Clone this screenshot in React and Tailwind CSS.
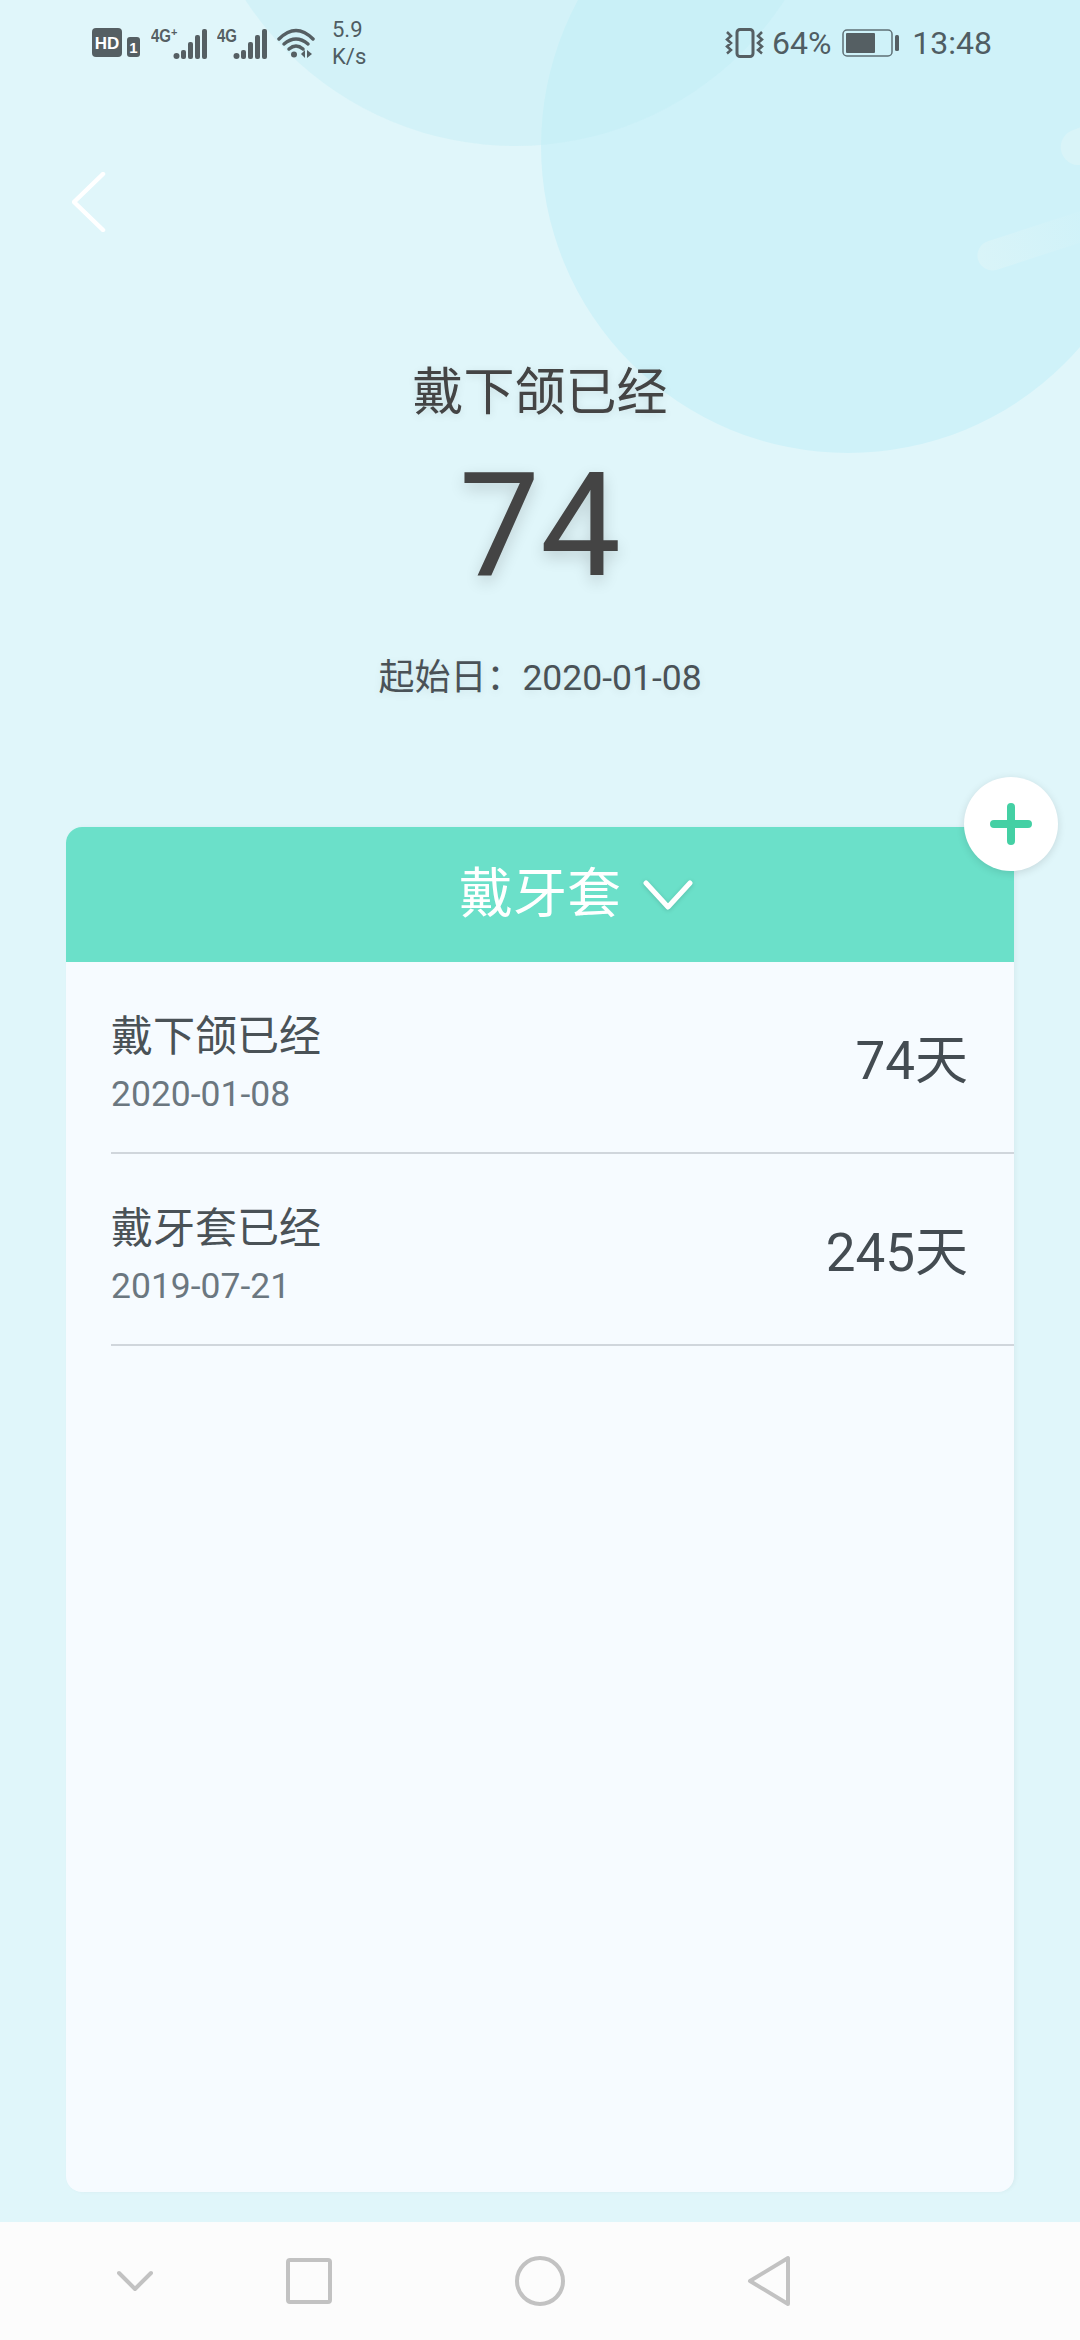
import React from 'react';

const rows = [
  { title: '戴下颌已经', date: '2020-01-08', days: '74' },
  { title: '戴牙套已经', date: '2019-07-21', days: '245' },
];

// offset pulls the bars closer to the label (plain 4G has no plus sign)
const SignalIcon = ({ plus, offset = 0 }) => (
  <svg width={56 - offset} height="34" viewBox={`0 0 ${56 - offset} 34`} fill="#555f63" className="block">
    <text x="0" y="16" fontSize="18" fontWeight="700" textLength="20" lengthAdjust="spacingAndGlyphs" fontFamily="'Liberation Sans',sans-serif">4G</text>
    {plus && <text x="20" y="10" fontSize="11" fontWeight="700" fontFamily="'Liberation Sans',sans-serif">+</text>}
    <g transform={`translate(${-offset} 0)`}>
      <circle cx="25.5" cy="30" r="3" />
      <rect x="30" y="24" width="5" height="9" rx="2" />
      <rect x="37" y="16" width="5" height="17" rx="2" />
      <rect x="44" y="9" width="5" height="24" rx="2" />
      <rect x="51" y="3" width="5" height="30" rx="2" />
    </g>
  </svg>
);

const StatusBar = () => (
  <div className="flex h-[86px] items-center pl-[92px] pr-[88px] text-[#4f5d63]">
    <svg width="48" height="30" viewBox="0 0 48 30" className="block">
      <rect x="0" y="0" width="30" height="29" rx="4" fill="#555f63" />
      <text x="15" y="21" textAnchor="middle" fontSize="17" fontWeight="700" fill="#fff" fontFamily="'Liberation Sans',sans-serif">HD</text>
      <rect x="35" y="9" width="13" height="20" rx="3" fill="#555f63" />
      <text x="41.5" y="25" textAnchor="middle" fontSize="15" fontWeight="700" fill="#fff" fontFamily="'Liberation Sans',sans-serif">1</text>
    </svg>
    <div className="ml-[11px]"><SignalIcon plus /></div>
    <div className="ml-[10px]"><SignalIcon offset={6} /></div>
    <svg width="38" height="30" viewBox="0 0 38 30" fill="none" stroke="#555f63" strokeWidth="3.5" strokeLinecap="round" className="ml-[10px] block">
      <path d="M2 11Q19 -6 36 11" />
      <path d="M7 16Q19 6 31 16" />
      <path d="M12 21Q19 15 26 21" />
      <circle cx="17" cy="26.5" r="3" fill="#555f63" stroke="none" />
      <path d="M28 22v8l-4-4zM30 22v8l5-4z" fill="#555f63" stroke="none" />
    </svg>
    <div className="ml-[17px] w-[40px] font-['Roboto',sans-serif] text-[22px] leading-[27px]">
      <div>5.9</div>
      <div>K/s</div>
    </div>
    <div className="flex-1" />
    <svg width="40" height="30" viewBox="0 0 40 30" fill="none" stroke="#555f63" className="block">
      <rect x="13" y="1.5" width="16" height="27" rx="3" strokeWidth="3" />
      <path d="M3 4l4 4-4 3.500 4 3.500-4 3.500 4 3.500-4 3.500M38 4l-4 4 4 3.500-4 3.500 4 3.500-4 3.500 4 3.500" strokeWidth="2.5" />
    </svg>
    <span className="ml-[8px] font-['Roboto',sans-serif] text-[32px] leading-none">64%</span>
    <svg width="57" height="28" viewBox="0 0 57 28" fill="none" className="ml-[11px] block">
      <rect x="1" y="1" width="49" height="26" rx="4" stroke="#5f7076" strokeWidth="1.5" />
      <rect x="4" y="4" width="29" height="20" rx="1" fill="#555f63" />
      <rect x="53" y="6" width="4" height="16" rx="1.5" fill="#555f63" />
    </svg>
    <span className="ml-[13px] font-['Roboto',sans-serif] text-[32px] leading-none">13:48</span>
  </div>
);

const NavBar = () => (
  <div className="relative h-[118px] bg-[#fcfcfc]">
    <div className="flex h-full items-center pl-[117px]">
      <svg width="36" height="22" viewBox="0 0 36 22" fill="none" stroke="#c2c2c2" strokeWidth="4" strokeLinecap="round" strokeLinejoin="round" className="block">
        <path d="M2 3l16 16L34 3" />
      </svg>
      <svg width="46" height="46" viewBox="0 0 46 46" fill="none" stroke="#c2c2c2" strokeWidth="4" className="ml-[133px] block">
        <rect x="2" y="2" width="42" height="42" rx="2" />
      </svg>
      <svg width="50" height="50" viewBox="0 0 50 50" fill="none" stroke="#c2c2c2" strokeWidth="4" className="ml-[183px] block">
        <circle cx="25" cy="25" r="23" />
      </svg>
      <svg width="44" height="52" viewBox="0 0 44 52" fill="none" stroke="#c2c2c2" strokeWidth="4" strokeLinejoin="round" className="ml-[182px] block">
        <path d="M41 3v46L3 26z" />
      </svg>
    </div>
  </div>
);

const App = () => {
  return (
    <div className="relative flex h-[2340px] w-[1080px] flex-col overflow-hidden bg-[#e0f6fa] font-['Roboto','Noto_Sans_CJK_SC',sans-serif] text-[#444]">
      {/* background decoration */}
      <div className="absolute left-[541px] top-[-161px] h-[614px] w-[614px] rounded-full bg-[#cff2f9]" />
      <div className="absolute left-[193px] top-[-498px] h-[644px] w-[644px] rounded-full bg-[#c0eef5]/40" />
      <div className="absolute left-[975px] top-[225px] h-[30px] w-[130px] -rotate-[18deg] rounded-full bg-gradient-to-r from-[#d9f4f8] to-transparent" />
      <div className="absolute left-[1060px] top-[125px] h-[36px] w-[60px] -rotate-[20deg] rounded-full bg-[#d9f4f8]" />

      <div className="relative flex flex-1 flex-col">
        <StatusBar />
        <div className="pl-[72px] pt-[86px]">
          <svg width="34" height="60" viewBox="0 0 34 60" fill="none" stroke="#fff" strokeWidth="4.5" strokeLinecap="round" strokeLinejoin="round" className="block">
            <path d="M31 2L2 30l29 28" />
          </svg>
        </div>

        <div className="flex flex-col items-center">
          <div className="mt-[126px] text-[51px] leading-[70px] [text-shadow:0_2px_8px_rgba(0,0,0,0.1)]">戴下颌已经</div>
          <div className="mt-[18px] text-[144px] leading-[160px] [text-shadow:0_6px_16px_rgba(0,0,0,0.16)]">74</div>
          <div className="mt-[47px] text-[36px] leading-[50px] text-[#4a5257] [text-shadow:0_2px_8px_rgba(0,0,0,0.08)]">
            起始日：<span className="text-[35.5px]">2020-01-08</span>
          </div>
        </div>

        {/* card */}
        <div className="relative mx-[66px] mt-[124px] flex-1 rounded-[16px] bg-[#f6fbff] shadow-[2px_0_4px_rgba(0,0,0,0.04)]">
          <div className="flex h-[135px] items-center justify-center rounded-t-[16px] bg-[#6be0c9] text-white">
            <span className="ml-[72px] text-[54px] leading-none">戴牙套</span>
            <svg width="50" height="30" viewBox="0 0 50 30" fill="none" stroke="#fff" strokeWidth="5" strokeLinecap="round" strokeLinejoin="round" className="ml-[22px] block drop-shadow-[0_1px_2px_rgba(0,0,0,0.15)]">
              <path d="M3 3l22 24L47 3" />
            </svg>
          </div>
          <button className="absolute right-[-44px] top-[-50px] flex h-[94px] w-[94px] items-center justify-center rounded-full bg-white shadow-[0_2px_8px_rgba(0,0,0,0.12)]">
            <svg width="42" height="42" viewBox="0 0 42 42" fill="none" stroke="#44d0a4" strokeWidth="8" strokeLinecap="round" className="block">
              <path d="M21 4v34M4 21h34" />
            </svg>
          </button>
          {rows.map((row) => (
            <div key={row.date} className="ml-[45px] flex h-[192px] items-center justify-between border-b-2 border-[#d0d6dc] pr-[46px]">
              <div className="pt-[14px]">
                <div className="text-[42px] leading-[56px] text-[#4a5257]">{row.title}</div>
                <div className="mt-[4px] text-[35.5px] leading-[50px] text-[#6b7780]">{row.date}</div>
              </div>
              <div className="pt-[8px] text-[53px] leading-none text-[#444c52]">{row.days}天</div>
            </div>
          ))}
        </div>
        <div className="h-[30px]" />
      </div>

      <div className="relative"><NavBar /></div>
    </div>
  );
};

export default App;
